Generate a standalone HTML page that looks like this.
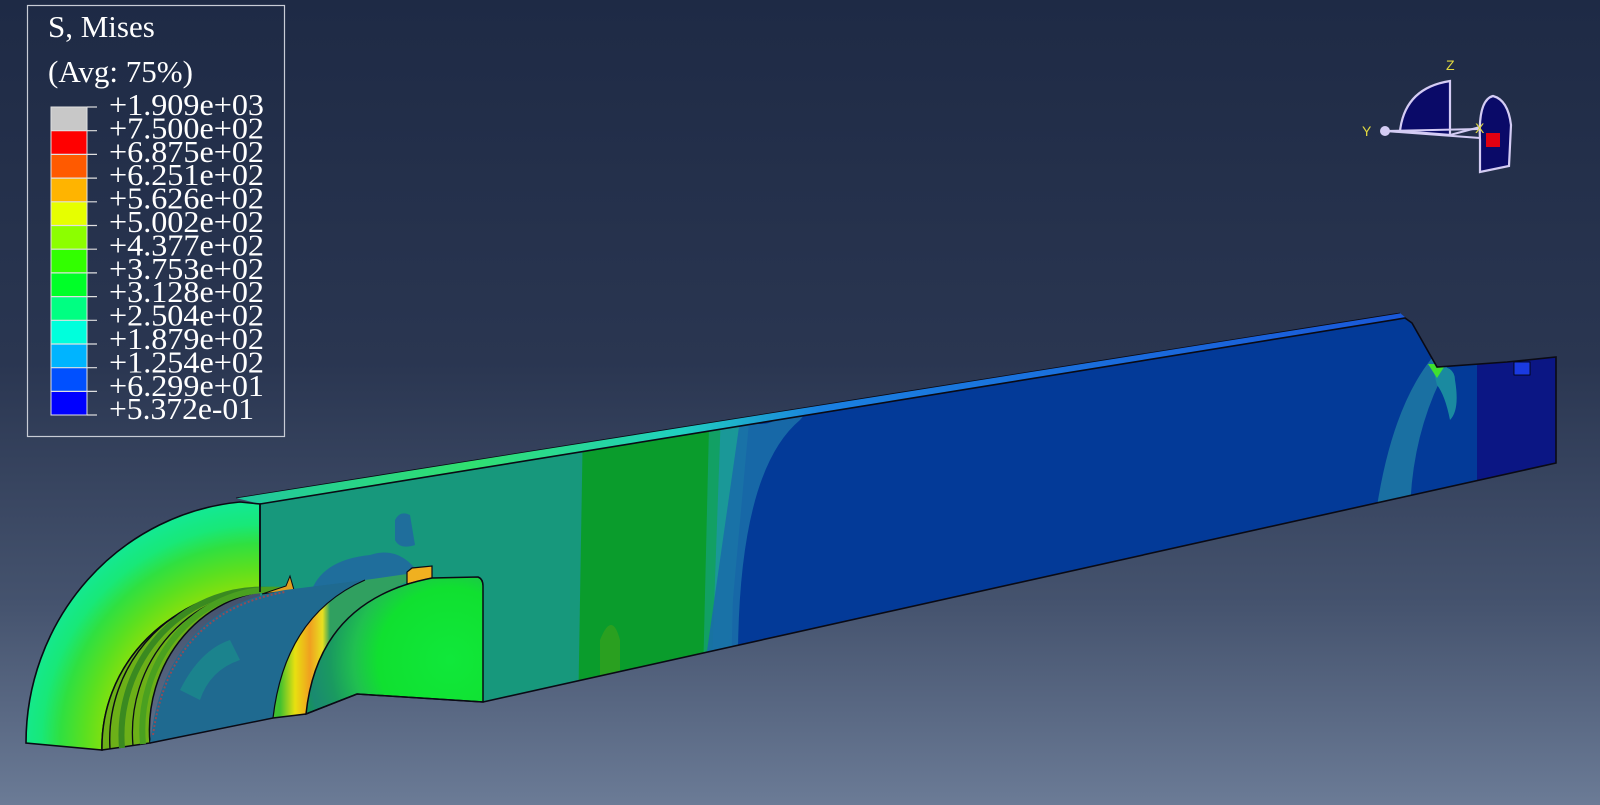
<!DOCTYPE html>
<html><head><meta charset="utf-8"><style>
html,body{margin:0;padding:0;width:1600px;height:805px;overflow:hidden;background:#1e2a45}
svg{display:block}
</style></head><body>
<svg width="1600" height="805" viewBox="0 0 1600 805" xmlns="http://www.w3.org/2000/svg">
<defs>
<linearGradient id="bg" x1="0" y1="0" x2="0" y2="1">
<stop offset="0" stop-color="#1e2a45"/><stop offset="0.45" stop-color="#2a3651"/><stop offset="0.75" stop-color="#45536e"/><stop offset="1" stop-color="#6b7b96"/>
</linearGradient>
<linearGradient id="strip" gradientUnits="userSpaceOnUse" x1="236" y1="0" x2="1405" y2="0">
<stop offset="0" stop-color="#20c8a0"/><stop offset="0.2" stop-color="#30e070"/><stop offset="0.38" stop-color="#20d0c0"/><stop offset="0.5" stop-color="#1a80e0"/><stop offset="1" stop-color="#1a58d8"/>
</linearGradient>
<radialGradient id="endf" gradientUnits="userSpaceOnUse" cx="262" cy="745" r="240">
<stop offset="0.66" stop-color="#80e010"/><stop offset="0.74" stop-color="#5ae020"/><stop offset="0.84" stop-color="#30e040"/><stop offset="0.92" stop-color="#18e878"/><stop offset="1" stop-color="#14e890"/>
</radialGradient>
<radialGradient id="disk" gradientUnits="userSpaceOnUse" cx="450" cy="660" r="160">
<stop offset="0" stop-color="#10e83a"/><stop offset="0.45" stop-color="#10e030"/><stop offset="0.6" stop-color="#20c050"/><stop offset="0.75" stop-color="#1a9a60"/><stop offset="0.88" stop-color="#1a8a70"/><stop offset="1" stop-color="#10a040"/>
</radialGradient>
<linearGradient id="yel" gradientUnits="userSpaceOnUse" x1="280" y1="0" x2="330" y2="0">
<stop offset="0" stop-color="#40c030"/><stop offset="0.3" stop-color="#e8e010"/><stop offset="0.6" stop-color="#f0a020"/><stop offset="0.85" stop-color="#e8e020"/><stop offset="1" stop-color="#30a060"/>
</linearGradient>
<clipPath id="face"><polygon points="260,504 1405,318 1412,323 1437,367 1507,362 1556,357 1556,463 483,702 483,580 260,596"/></clipPath>
</defs>
<rect width="1600" height="805" fill="url(#bg)"/>

<!-- Legend -->
<rect x="27.5" y="5.5" width="257" height="431" fill="none" stroke="#c8ccd6" stroke-width="1.2"/>
<g font-family="Liberation Serif, serif" fill="#ffffff">
<text x="48" y="37" font-size="31">S, Mises</text>
<text x="48" y="82" font-size="31">(Avg: 75%)</text>
</g>
<g>
<rect x="51" y="107" width="36" height="23.7" fill="#c8c8c8"/>
<rect x="51" y="130.7" width="36" height="23.7" fill="#ff0000"/>
<rect x="51" y="154.4" width="36" height="23.7" fill="#ff5a00"/>
<rect x="51" y="178.1" width="36" height="23.7" fill="#ffb400"/>
<rect x="51" y="201.8" width="36" height="23.7" fill="#e6ff00"/>
<rect x="51" y="225.5" width="36" height="23.7" fill="#8cff00"/>
<rect x="51" y="249.2" width="36" height="23.7" fill="#32ff00"/>
<rect x="51" y="272.9" width="36" height="23.7" fill="#00ff28"/>
<rect x="51" y="296.6" width="36" height="23.7" fill="#00ff82"/>
<rect x="51" y="320.3" width="36" height="23.7" fill="#00ffdc"/>
<rect x="51" y="344" width="36" height="23.7" fill="#00b4ff"/>
<rect x="51" y="367.7" width="36" height="23.7" fill="#0050ff"/>
<rect x="51" y="391.4" width="36" height="23.7" fill="#0000ff"/>
<rect x="51" y="107" width="36" height="308" fill="none" stroke="#e0e0e0" stroke-width="1"/>
<g stroke="#e0e0e0" stroke-width="1.2">
<line x1="51" y1="130.7" x2="97" y2="130.7"/><line x1="51" y1="154.4" x2="97" y2="154.4"/><line x1="51" y1="178.1" x2="97" y2="178.1"/><line x1="51" y1="201.8" x2="97" y2="201.8"/><line x1="51" y1="225.5" x2="97" y2="225.5"/><line x1="51" y1="249.2" x2="97" y2="249.2"/><line x1="51" y1="272.9" x2="97" y2="272.9"/><line x1="51" y1="296.6" x2="97" y2="296.6"/><line x1="51" y1="320.3" x2="97" y2="320.3"/><line x1="51" y1="344" x2="97" y2="344"/><line x1="51" y1="367.7" x2="97" y2="367.7"/><line x1="51" y1="391.4" x2="97" y2="391.4"/><line x1="87" y1="107" x2="97" y2="107"/><line x1="87" y1="415" x2="97" y2="415"/>
</g>
</g>
<g font-family="Liberation Serif, serif" font-size="31" fill="#ffffff" textLength="155">
<text x="109" y="115" textLength="155" lengthAdjust="spacingAndGlyphs">+1.909e+03</text>
<text x="109" y="138.4" textLength="155" lengthAdjust="spacingAndGlyphs">+7.500e+02</text>
<text x="109" y="161.8" textLength="155" lengthAdjust="spacingAndGlyphs">+6.875e+02</text>
<text x="109" y="185.2" textLength="155" lengthAdjust="spacingAndGlyphs">+6.251e+02</text>
<text x="109" y="208.6" textLength="155" lengthAdjust="spacingAndGlyphs">+5.626e+02</text>
<text x="109" y="232" textLength="155" lengthAdjust="spacingAndGlyphs">+5.002e+02</text>
<text x="109" y="255.4" textLength="155" lengthAdjust="spacingAndGlyphs">+4.377e+02</text>
<text x="109" y="278.8" textLength="155" lengthAdjust="spacingAndGlyphs">+3.753e+02</text>
<text x="109" y="302.2" textLength="155" lengthAdjust="spacingAndGlyphs">+3.128e+02</text>
<text x="109" y="325.6" textLength="155" lengthAdjust="spacingAndGlyphs">+2.504e+02</text>
<text x="109" y="349" textLength="155" lengthAdjust="spacingAndGlyphs">+1.879e+02</text>
<text x="109" y="372.4" textLength="155" lengthAdjust="spacingAndGlyphs">+1.254e+02</text>
<text x="109" y="395.8" textLength="155" lengthAdjust="spacingAndGlyphs">+6.299e+01</text>
<text x="109" y="419.2" textLength="145" lengthAdjust="spacingAndGlyphs">+5.372e-01</text>
</g>

<!-- Triad -->
<g>
<path d="M1400,131 Q1405,88 1450,81 L1450,135 Z" fill="#0a0a68" stroke="#d4ccf4" stroke-width="2.2"/>
<path d="M1480,140 Q1478,100 1493,96 Q1508,100 1511,125 L1509,166 L1480,172 Z" fill="#0a0a68" stroke="#d4ccf4" stroke-width="2.2"/>
<line x1="1385" y1="131" x2="1480" y2="129" stroke="#d4ccf4" stroke-width="2"/>
<line x1="1385" y1="131" x2="1480" y2="138" stroke="#d4ccf4" stroke-width="2"/>
<line x1="1450" y1="135" x2="1480" y2="127" stroke="#d4ccf4" stroke-width="2"/>
<circle cx="1385" cy="131" r="5" fill="#d4ccf4"/>
<rect x="1486" y="133" width="14" height="14" fill="#e00010"/>
<g font-family="Liberation Sans, sans-serif" font-size="14" fill="#e0d840">
<text x="1446" y="70">Z</text><text x="1362" y="136">Y</text><text x="1475" y="133">X</text>
</g>
</g>

<!-- Top strip -->
<polygon points="236,498 1400,313 1406,318 260,504" fill="url(#strip)"/>

<!-- Front face -->
<g clip-path="url(#face)">
<rect x="200" y="300" width="1400" height="420" fill="#033a98"/>
<polygon points="250,300 740,300 730,720 250,720" fill="#1a8aa0"/>
<polygon points="250,300 760,300 722,720 250,720" fill="#1a9898"/>
<polygon points="250,300 725,300 710,720 250,720" fill="#12a064"/>
<polygon points="250,300 712,300 702,720 250,720" fill="#0a9c2c"/>
<polygon points="250,300 585,300 578,720 250,720" fill="#17987c"/>
<path d="M740,420 Q770,430 780,415 L800,300 L900,300 L800,420 Q740,470 738,650 L700,700 Z" fill="#1a6ea8" opacity="0.9"/>
<path d="M310,595 Q320,560 370,555 Q400,545 420,575 L300,600 Z" fill="#1f6e9c"/>
<path d="M395,520 Q400,510 410,515 L415,545 Q400,550 395,540 Z" fill="#1f6e9c"/>
<path d="M600,640 Q612,610 620,640 L620,690 L600,690 Z" fill="#2aa020"/>
<path d="M1375,520 Q1390,410 1432,358 L1452,358 Q1410,430 1410,520 Z" fill="#1a70a2"/>
<path d="M1432,365 Q1455,365 1455,380 Q1460,410 1450,420 Q1445,395 1437,385 Z" fill="#1a8aa0"/>
<polygon points="1477,300 1600,300 1600,720 1477,720" fill="#0b1684"/>
<polygon points="1428,364 1446,364 1437,378" fill="#40e030"/>
<rect x="1514" y="362" width="16" height="13" fill="#1a3ae0" stroke="#000" stroke-width="0.8"/>
</g>
<polyline points="260,504 1405,318 1412,323 1437,367 1507,362 1556,357 1556,463 483,702" fill="none" stroke="#0a0a14" stroke-width="1.6"/>
<line x1="236" y1="498" x2="1400" y2="313" stroke="#0a0a14" stroke-width="0.8"/>

<!-- End face -->
<path d="M26,743 A236,242 0 0 1 240,502 L260,504 L260,592 A158,155 0 0 0 102,750 Z" fill="url(#endf)" stroke="#0a0a14" stroke-width="1.6"/>
<!-- rings -->
<path d="M102,750 A158,155 0 0 1 260,592 L282,590 A132,140 0 0 0 150,743 Z" fill="#6cb018" stroke="#0a0a14" stroke-width="1.5"/>
<path d="M110,749 A150,150 0 0 1 268,590" fill="none" stroke="#0a0a14" stroke-width="1.4"/>
<path d="M122,748 A140,146 0 0 1 272,590" fill="none" stroke="#3a8a20" stroke-width="6"/>
<path d="M133,746 A138,143 0 0 1 278,590" fill="none" stroke="#0a0a14" stroke-width="1.3"/>
<path d="M143,744 A130,140 0 0 1 282,590" fill="none" stroke="#4aa020" stroke-width="6"/>
<path d="M262,594 L286,586 L290,576 L294,590 Z" fill="#e0a020" stroke="#0a0a14" stroke-width="1"/>
<!-- bore -->
<path d="M150,743 Q165,610 285,590 L365,580 Q290,620 273,718 Z" fill="#1f6a90"/>
<path d="M153,735 Q170,612 285,592" fill="none" stroke="#c04040" stroke-width="2" stroke-dasharray="2,2" opacity="0.7"/>
<path d="M180,690 Q200,650 230,640 L240,660 Q210,670 200,700 Z" fill="#1a8a8c" opacity="0.8"/>
<!-- yellow band -->
<path d="M273,718 Q285,615 365,580 L407,574 L432,570 Q325,612 306,714 Z" fill="url(#yel)"/>
<path d="M407,584 L407,572 L412,568 L432,566 L432,578 Z" fill="#f0b020" stroke="#0a0a14" stroke-width="1.2"/>
<!-- disk -->
<path d="M306,714 Q318,600 432,578 L478,577 Q483,579 483,586 L483,702 L357,694 Z" fill="url(#disk)" stroke="#0a0a14" stroke-width="1.5"/>
<path d="M273,718 Q285,615 365,580" fill="none" stroke="#0a0a14" stroke-width="1.2"/>
<path d="M150,743 L273,718 L306,714 L357,694 L483,702" fill="none" stroke="#0a0a14" stroke-width="1.5"/>
<line x1="260" y1="504" x2="260" y2="592" stroke="#0a0a14" stroke-width="1.6"/>
</svg>
</body></html>
